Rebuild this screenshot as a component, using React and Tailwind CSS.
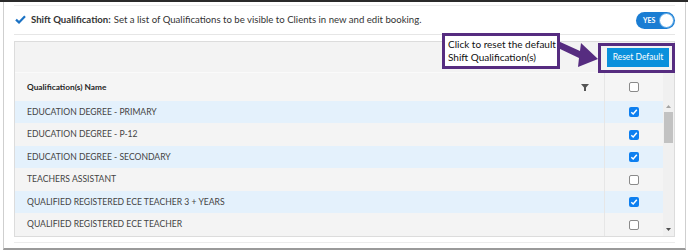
import React from "react";

const rows = [
  { name: "EDUCATION DEGREE - PRIMARY", checked: true },
  { name: "EDUCATION DEGREE - P-12", checked: true },
  { name: "EDUCATION DEGREE - SECONDARY", checked: true },
  { name: "TEACHERS ASSISTANT", checked: false },
  { name: "QUALIFIED REGISTERED ECE TEACHER 3 + YEARS", checked: true },
  { name: "QUALIFIED REGISTERED ECE TEACHER", checked: false },
];

function Box({ checked }) {
  if (checked) {
    return (
      <div className="w-[10px] h-[10px] rounded-[2px] bg-[#0d7ff0] flex items-center justify-center">
        <svg width="8" height="8" viewBox="0 0 8 8">
          <path d="M1.3 4.2 L3.2 6 L6.8 1.8" fill="none" stroke="#fff" strokeWidth="1.5" />
        </svg>
      </div>
    );
  }
  return <div className="w-[10px] h-[10px] rounded-[2px] bg-white border border-[#8a8a8a]" />;
}

export default function App() {
  return (
    <div className="relative w-[688px] h-[250px] bg-white overflow-hidden flex flex-col" style={{ fontFamily: "Lato, 'Open Sans', sans-serif" }}>
      <div className="h-[2px] bg-[#2a2a2a] shrink-0" />
      <div className="flex-1 ml-[3px] mr-[2px] border-x border-[#cfcfcf] border-b-2 border-b-[#9a9a9a] flex flex-col">
        <div className="ml-[10px] mr-[10px] mt-[3px] border-t border-[#ededed] flex flex-col">
          <div className="h-[29px] flex items-center justify-between border-b border-[#e6e6e6]">
            <div className="flex items-center pl-[1px] text-[9.6px] text-[#333]">
              <svg width="11" height="9" viewBox="0 0 11 9" className="mr-[5px]">
                <path d="M1 4.6 L4 7.4 L10 1.2" fill="none" stroke="#1b72c4" strokeWidth="2.2" />
              </svg>
              <span className="font-bold mr-[3px]">Shift Qualification:</span>
              <span>Set a list of Qualifications to be visible to Clients in new and edit booking.</span>
            </div>
            <div className="w-[39px] h-[17px] rounded-full bg-[#1a7dd3] flex items-center justify-between pl-[7px] pr-[1px]">
              <span className="text-white font-bold text-[7px] leading-none">YES</span>
              <div className="w-[15px] h-[15px] rounded-full bg-white border border-[#5aa7e6]" />
            </div>
          </div>
          <div className="mt-[6px] border border-[#dcdcdc] bg-[#f3f3f3] flex flex-col">
            <div className="h-[31px] flex items-center justify-end pr-[5px] border-b border-[#fafafa]">
              <div className="h-[19px] w-[62px] bg-[#0a90dc] text-white text-[8.5px] flex items-center justify-center whitespace-nowrap">
                Reset Default
              </div>
            </div>
            <div className="flex">
              <div className="flex-1 flex flex-col">
                <div className="h-[28px] flex items-center bg-[#f5f5f5]">
                  <div className="flex-1 flex items-center justify-between pl-[12px] pr-[15px] text-[8.3px] font-bold text-[#262626]">
                    <span>Qualification(s) Name</span>
                    <svg width="8" height="7" viewBox="0 0 8 7">
                      <path d="M0 0 H8 L5 3.5 V7 H3 V3.5 Z" fill="#555" />
                    </svg>
                  </div>
                  <div className="w-[59px] h-full border-l border-[#e6e6e6] flex items-center justify-center">
                    <Box checked={false} />
                  </div>
                </div>
                {rows.map((r, i) => (
                  <div key={i} className={`${i % 2 === 0 ? "bg-[#e4f1fc] h-[22px]" : "bg-[#f4f4f4] h-[23px]"} flex items-center`}>
                    <div className="flex-1 pl-[12px] text-[8.6px] text-[#444]">{r.name}</div>
                    <div className="w-[59px] h-full border-l border-[#e6e6e6] flex items-center justify-center">
                      <Box checked={r.checked} />
                    </div>
                  </div>
                ))}
              </div>
              <div className="w-[11px] bg-[#f0f0f0] flex flex-col">
                <div className="h-[28px]" />
                <div className="h-[11px] flex items-center justify-center">
                  <svg width="5" height="3" viewBox="0 0 5 3"><path d="M0 3 L2.5 0 L5 3 Z" fill="#a3a3a3" /></svg>
                </div>
                <div className="mx-[1px] h-[31px] bg-[#c2c2c2]" />
                <div className="flex-1 flex items-end justify-center pb-[5px]">
                  <svg width="5" height="3" viewBox="0 0 5 3"><path d="M0 0 L5 0 L2.5 3 Z" fill="#505050" /></svg>
                </div>
              </div>
            </div>
          </div>
          <div className="mt-[5px] border-t border-[#ececec]" />
        </div>
      </div>

      {/* annotation overlay */}
      <div className="absolute left-[442px] top-[33px] w-[118px] h-[36px] bg-white border-[3px] border-[#562c80] pl-[3px] pt-[2px] text-[10px] leading-[13px] text-[#111] whitespace-nowrap">
        Click to reset the default
        <br />
        Shift Qualification(s)
      </div>
      <div className="absolute left-[598px] top-[43px] w-[77px] h-[30px] border-[3px] border-[#562c80]" />
      <svg className="absolute left-0 top-0 pointer-events-none" width="688" height="250" viewBox="0 0 688 250">
        <polygon points="558,41 580,51 581,43 598,59 578,67 579,58 558,48" fill="#562c80" />
      </svg>
    </div>
  );
}
